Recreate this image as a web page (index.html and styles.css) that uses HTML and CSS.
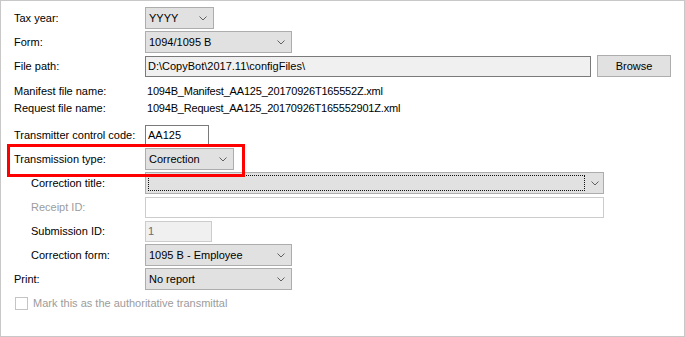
FILE: index.html
```html
<!DOCTYPE html>
<html lang="en">
<head>
  <meta charset="UTF-8">
  <title>Transmittal Settings</title>
  <link rel="stylesheet" href="styles.css">
</head>
<body>
  <div class="panel">

    <!-- File settings -->
    <div class="row">
      <span class="lbl">Tax year:</span>
      <div class="select w-year"><span class="val">YYYY</span><svg class="chev" width="8" height="5" viewBox="0 0 8 5"><path d="M0.5 0.5 L4 4 L7.5 0.5"/></svg></div>
    </div>
    <div class="row">
      <span class="lbl">Form:</span>
      <div class="select w-form"><span class="val">1094/1095 B</span><svg class="chev" width="8" height="5" viewBox="0 0 8 5"><path d="M0.5 0.5 L4 4 L7.5 0.5"/></svg></div>
    </div>
    <div class="row">
      <span class="lbl">File path:</span>
      <div class="input readonly w-path">D:\CopyBot\2017.11\configFiles\</div>
      <button class="btn">Browse</button>
    </div>

    <div class="info">
      <div class="info-row"><span class="lbl">Manifest file name:</span><span class="info-val">1094B_Manifest_AA125_20170926T165552Z.xml</span></div>
      <div class="info-row"><span class="lbl">Request file name:</span><span class="info-val">1094B_Request_AA125_20170926T165552901Z.xml</span></div>
    </div>

    <!-- Transmission -->
    <div class="row">
      <span class="lbl">Transmitter control code:</span>
      <div class="input w-code">AA125</div>
    </div>
    <div class="row">
      <span class="lbl">Transmission type:</span>
      <div class="select w-type"><span class="val">Correction</span><svg class="chev" width="8" height="5" viewBox="0 0 8 5"><path d="M0.5 0.5 L4 4 L7.5 0.5"/></svg></div>
    </div>
    <div class="row">
      <span class="lbl sub">Correction title:</span>
      <div class="select focused w-title"><span class="focus-rect"></span><svg class="chev" width="8" height="5" viewBox="0 0 8 5"><path d="M0.5 0.5 L4 4 L7.5 0.5"/></svg></div>
    </div>
    <div class="row">
      <span class="lbl sub disabled">Receipt ID:</span>
      <div class="input disabled-input w-title"></div>
    </div>
    <div class="row">
      <span class="lbl sub">Submission ID:</span>
      <div class="input readonly dim w-sub">1</div>
    </div>
    <div class="row">
      <span class="lbl sub">Correction form:</span>
      <div class="select w-form"><span class="val">1095 B - Employee</span><svg class="chev" width="8" height="5" viewBox="0 0 8 5"><path d="M0.5 0.5 L4 4 L7.5 0.5"/></svg></div>
    </div>
    <div class="row">
      <span class="lbl">Print:</span>
      <div class="select w-form"><span class="val">No report</span><svg class="chev" width="8" height="5" viewBox="0 0 8 5"><path d="M0.5 0.5 L4 4 L7.5 0.5"/></svg></div>
    </div>
    <div class="row check-row">
      <span class="checkbox"></span>
      <span class="disabled">Mark this as the authoritative transmittal</span>
    </div>

    <!-- Annotation -->
    <div class="callout"></div>
  </div>
</body>
</html>
```

FILE: styles.css
```css
body {
  margin: 0;
  font-family: "Liberation Sans", Arial, sans-serif;
  font-size: 11px;
  color: #000;
  background: #fff;
}

.panel {
  position: relative;
  width: 685px;
  height: 337px;
  box-sizing: border-box;
  border: 1px solid #c8c8c8;
  padding: 5px 0 0 13px;
}

.row {
  display: flex;
  align-items: center;
  height: 24px;
}

.lbl {
  width: 131px;
  flex-shrink: 0;
}

.lbl.sub {
  padding-left: 17px;
  width: 114px;
}

.disabled {
  color: #9c9c9c;
}

.select {
  display: flex;
  align-items: center;
  justify-content: space-between;
  height: 22px;
  box-sizing: border-box;
  border: 1px solid #adadad;
  background: #e1e1e1;
  padding: 0 6px 0 2px;
}

.select .val {
  padding-left: 1px;
}

.chev path {
  fill: none;
  stroke: #606060;
  stroke-width: 1;
}

.select.focused {
  padding: 2px 4px 2px 2px;
}

.focus-rect {
  flex: 1;
  align-self: stretch;
  margin-right: 6px;
  border: 1px dotted #111;
}

.input {
  height: 21px;
  box-sizing: border-box;
  border: 1px solid #7a7a7a;
  background: #fff;
  padding: 0 2px;
  line-height: 19px;
}

.input.readonly {
  background: #f0f0f0;
}

.input.dim {
  color: #6d6d6d;
  border-color: #cccccc;
}

.disabled-input {
  border-color: #cccccc;
}

.btn {
  height: 22px;
  width: 74px;
  margin-left: 6px;
  border: 1px solid #adadad;
  background: #e1e1e1;
  font-family: inherit;
  font-size: 11px;
  color: #000;
  padding: 0;
}

.w-year { width: 69px; }
.w-form { width: 147px; }
.w-path { width: 446px; }
.w-code { width: 64px; }
.w-type { width: 89px; }
.w-title { width: 459px; }
.w-sub { width: 67px; }

.info {
  padding: 4px 0 7px;
}

.info-row {
  display: flex;
  align-items: center;
  height: 17px;
}

.info-val {
  padding-left: 2px;
  letter-spacing: -0.2px;
}

.check-row {
  padding-left: 1px;
}

.checkbox {
  width: 13px;
  height: 13px;
  box-sizing: border-box;
  border: 1px solid #c4c4c4;
  background: #fff;
  margin-right: 5px;
}

.callout {
  position: absolute;
  left: 6px;
  top: 143px;
  width: 238px;
  height: 33px;
  box-sizing: border-box;
  border: 3px solid #ff0000;
}
```
